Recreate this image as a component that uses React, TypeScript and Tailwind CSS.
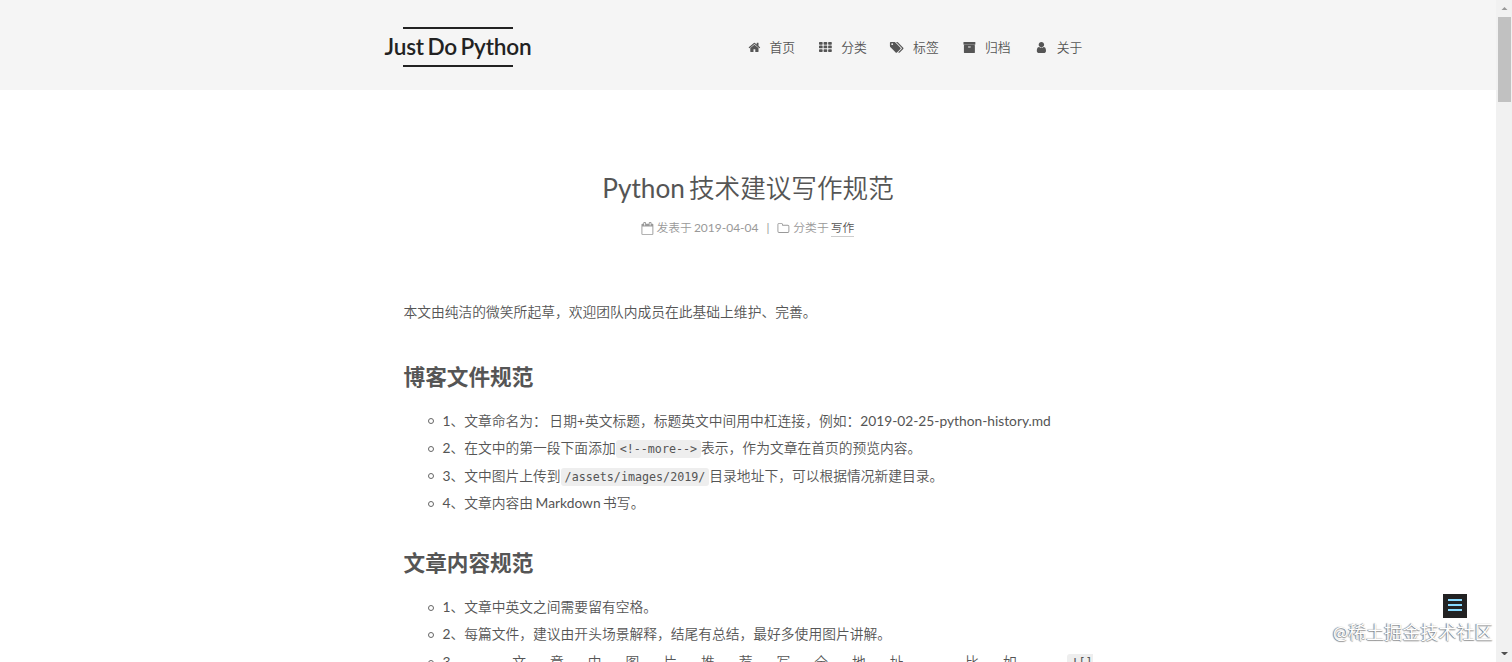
import type { ReactNode } from "react";

const icons = {
  home: "M1472 992v480q0 26-19 45t-45 19h-384v-384h-256v384h-384q-26 0-45-19t-19-45v-480q0-1 .5-3t.5-3l575-474 575 474q1 2 1 6zm223-69l-62 74q-8 9-21 11h-3q-13 0-21-7l-692-577-692 577q-12 8-24 7-13-2-21-11l-62-74q-8-10-7-23.5t11-21.5l719-599q32-26 76-26t76 26l244 204v-195q0-14 9-23t23-9h192q14 0 23 9t9 23v408l219 182q10 8 11 21.5t-7 23.5z",
  tags: "M576 448q0-53-37.5-90.5t-90.5-37.5-90.5 37.5-37.5 90.5 37.5 90.5 90.5 37.5 90.5-37.5 37.5-90.5zm1067 576q0 53-37 90l-491 492q-39 37-91 37-53 0-90-37l-715-716q-38-37-64.5-101t-26.5-117v-416q0-52 38-90t90-38h416q53 0 117 26.5t102 64.5l715 714q37 39 37 91zm384 0q0 53-37 90l-491 492q-39 37-91 37-36 0-59-14t-53-45l470-470q37-37 37-90 0-52-37-91l-715-714q-38-38-102-64.5t-117-26.5h224q53 0 117 26.5t102 64.5l715 714q37 39 37 91z",
  archive:
    "M1088 832q0-26-19-45t-45-19h-256q-26 0-45 19t-19 45 19 45 45 19h256q26 0 45-19t19-45zm576-192v960q0 26-19 45t-45 19h-1408q-26 0-45-19t-19-45v-960q0-26 19-45t45-19h1408q26 0 45 19t19 45zm64-448v256q0 26-19 45t-45 19h-1536q-26 0-45-19t-19-45v-256q0-26 19-45t45-19h1536q26 0 45 19t19 45z",
  user: "M1536 1399q0 109-62.5 187t-150.5 78h-854q-88 0-150.5-78t-62.5-187q0-85 8.5-160.5t31.5-152 58.5-131 94-89 134.5-34.5q131 128 313 128t313-128q76 0 134.5 34.5t94 89 58.5 131 31.5 152 8.5 160.5zm-256-887q0 159-112.5 271.5t-271.5 112.5-271.5-112.5-112.5-271.5 112.5-271.5 271.5-112.5 271.5 112.5 112.5 271.5z",
  th: "M96 128h320q96 0 96 96v192q0 96-96 96h-320q-96 0-96-96v-192q0-96 96-96zM736 128h320q96 0 96 96v192q0 96-96 96h-320q-96 0-96-96v-192q0-96 96-96zM1376 128h320q96 0 96 96v192q0 96-96 96h-320q-96 0-96-96v-192q0-96 96-96zM96 640h320q96 0 96 96v192q0 96-96 96h-320q-96 0-96-96v-192q0-96 96-96zM736 640h320q96 0 96 96v192q0 96-96 96h-320q-96 0-96-96v-192q0-96 96-96zM1376 640h320q96 0 96 96v192q0 96-96 96h-320q-96 0-96-96v-192q0-96 96-96zM96 1152h320q96 0 96 96v192q0 96-96 96h-320q-96 0-96-96v-192q0-96 96-96zM736 1152h320q96 0 96 96v192q0 96-96 96h-320q-96 0-96-96v-192q0-96 96-96zM1376 1152h320q96 0 96 96v192q0 96-96 96h-320q-96 0-96-96v-192q0-96 96-96z",
  calendar:
    "M192 1664h1408v-1024h-1408v1024zm384-1216v-288q0-14-9-23t-23-9h-64q-14 0-23 9t-9 23v288q0 14 9 23t23 9h64q14 0 23-9t9-23zm768 0v-288q0-14-9-23t-23-9h-64q-14 0-23 9t-9 23v288q0 14 9 23t23 9h64q14 0 23-9t9-23zm384-64v1280q0 52-38 90t-90 38h-1408q-52 0-90-38t-38-90v-1280q0-52 38-90t90-38h128v-96q0-66 47-113t113-47h64q66 0 113 47t47 113v96h384v-96q0-66 47-113t113-47h64q66 0 113 47t47 113v96h128q52 0 90 38t38 90z",
  folder:
    "M1600 1312v-704q0-40-28-68t-68-28h-704q-40 0-68-28t-28-68v-64q0-40-28-68t-68-28h-320q-40 0-68 28t-28 68v960q0 40 28 68t68 28h1216q40 0 68-28t28-68zm128-704v704q0 92-66 158t-158 66h-1216q-92 0-158-66t-66-158v-960q0-92 66-158t158-66h320q92 0 158 66t66 158v32h672q92 0 158 66t66 158z",
};

type IconName = keyof typeof icons;

const menu: { icon: IconName; label: string; className?: string }[] = [
  { icon: "home", label: "首页" },
  { icon: "th", label: "分类", className: "-ml-px" },
  { icon: "tags", label: "标签", className: "-ml-[2.5px]" },
  { icon: "archive", label: "归档" },
  { icon: "user", label: "关于" },
];

function Icon({ name, className = "" }: { name: IconName; className?: string }) {
  return (
    <svg
      viewBox={name === "tags" ? "0 0 2048 1792" : "0 0 1792 1792"}
      className={`h-[12.8px] shrink-0 overflow-visible fill-current ${className}`}
    >
      <path d={icons[name]} />
    </svg>
  );
}

function Code({ children, className = "rounded-[3px] px-1" }: { children: ReactNode; className?: string }) {
  return (
    <code
      className={`bg-[#eee] py-0.5 font-['DejaVu_Sans_Mono',monospace] text-[11.7px] leading-none ${className}`}
    >
      {children}
    </code>
  );
}

function Item({ children, className = "" }: { children: ReactNode; className?: string }) {
  return (
    <li className="flex h-[27.56px] items-center">
      <span className="mr-[9px] mt-0.5 h-1.5 w-1.5 shrink-0 rounded-full border border-[#666]" />
      <div className={`flex-1 whitespace-nowrap ${className}`}>{children}</div>
    </li>
  );
}

function Header() {
  return (
    <header className="h-[90px] bg-[#f5f5f5]">
      <div className="mx-auto flex h-full w-[726px] justify-between">
        <div className="flex w-[146px] flex-col items-center pt-[27px] text-[#222]">
          <span className="h-0.5 w-[110px] bg-[#222]" />
          <span className="h-9 whitespace-nowrap text-[22.6px] leading-[36px] font-semibold tracking-[-0.17px] [word-spacing:-2px]">
            Just Do Python
          </span>
          <span className="h-0.5 w-[110px] bg-[#222]" />
        </div>
        <nav className="flex w-[363px] pt-[37px] text-[12.8px] leading-[20px] text-[#555]">
          {menu.map(({ icon, label, className }) => (
            <a key={label} className="flex h-5 w-[71.8px] shrink-0 items-center">
              <span className="flex w-[21.5px]">
                <Icon name={icon} className={className} />
              </span>
              {label}
            </a>
          ))}
        </nav>
      </div>
    </header>
  );
}

function Post() {
  return (
    <article className="mx-auto w-[689px] pt-[78px] text-[#555]">
      <h1 className="text-center text-[25.6px] leading-[40px] [word-spacing:-2.5px]">
        <span className="text-[26.2px]">Python</span> 技术建议写作规范
      </h1>
      <div className="mt-2.5 flex h-5 items-center justify-center text-[11.8px] text-[#999]">
        <Icon name="calendar" className="mr-[3px]" />
        <span className="[word-spacing:-1px]">
          发表于 <span className="text-[12px]">2019-04-04</span>
        </span>
        <span className="mx-2">|</span>
        <Icon name="folder" className="mr-[3px]" />
        <span>分类于</span>
        <a className="mr-px ml-0.5 border-b border-[#ccc] leading-4 text-[#555]">写作</a>
      </div>

      <div className="mt-[60px] text-[13.78px] leading-[27.56px]">
        <p>本文由纯洁的微笑所起草，欢迎团队内成员在此基础上维护、完善。</p>

        <h2 className="mt-[35px] font-[Lato,'Noto_Sans_CJK_SC',sans-serif] text-[21.65px] leading-[32px] font-bold">
          博客文件规范
        </h2>
        <ul className="mt-[14px] pl-6">
          <Item className="[word-spacing:-1px]">
            1、文章命名为： 日期+英文标题，标题英文中间用中杠连接，例如：2019-02-25-python-history.md
          </Item>
          <Item>
            2、在文中的第一段下面添加<Code>&lt;!--more--&gt;</Code>表示，作为文章在首页的预览内容。
          </Item>
          <Item>
            3、文中图片上传到<Code>/assets/images/2019/</Code>目录地址下，可以根据情况新建目录。
          </Item>
          <Item className="[word-spacing:-1px]">4、文章内容由 Markdown 书写。</Item>
        </ul>

        <h2 className="mt-[30px] font-[Lato,'Noto_Sans_CJK_SC',sans-serif] text-[21.65px] leading-[32px] font-bold">
          文章内容规范
        </h2>
        <ul className="mt-[14px] pl-6">
          <Item>1、文章中英文之间需要留有空格。</Item>
          <Item>2、每篇文件，建议由开头场景解释，结尾有总结，最好多使用图片讲解。</Item>
          <Item className="text-justify [text-align-last:justify]">
            3、文章中图片推荐写全地址，比如<span className="align-[-5px] leading-none">：</span>
            <Code className="-ml-[11px] rounded-l-[3px] pl-1">![]</Code>
          </Item>
        </ul>
      </div>
    </article>
  );
}

function Scrollbar() {
  return (
    <div className="flex w-4 shrink-0 flex-col items-center justify-between bg-[#f1f1f1]">
      <div className="flex flex-col items-center">
        <span className="flex h-[17px] items-center">
          <svg viewBox="0 0 8 4" className="w-[7px] fill-[#999]">
            <path d="M4 0l4 4H0z" />
          </svg>
        </span>
        <span className="h-[85px] w-[13px] bg-[#c1c1c1]" />
      </div>
      <span className="flex h-[17px] items-center">
        <svg viewBox="0 0 8 4" className="w-[7px] fill-[#505050]">
          <path d="M4 4l4-4H0z" />
        </svg>
      </span>
    </div>
  );
}

export default function App() {
  return (
    <div className="relative flex h-[662px] w-[1512px] overflow-hidden bg-white font-[Lato,'Noto_Sans_CJK_SC_DemiLight','Noto_Sans_CJK_SC_Light','Noto_Sans_CJK_SC',sans-serif]">
      <main className="min-w-0 flex-1">
        <Header />
        <Post />
      </main>
      <Scrollbar />

      {/* sidebar toggle */}
      <button className="absolute top-[594px] left-[1443px] flex h-6 w-6 flex-col items-center gap-[3px] bg-[#222] pt-[5px]">
        <span className="h-0.5 w-3.5 bg-[#87daff]" />
        <span className="h-0.5 w-3.5 bg-[#87daff]" />
        <span className="h-0.5 w-3.5 bg-[#87daff]" />
      </button>
      <span className="absolute top-[620px] left-[1333px] text-[18.1px] leading-6 whitespace-nowrap text-white [text-shadow:-1px_0_1px_#777,0_1px_1px_#999]">
        @稀土掘金技术社区
      </span>
    </div>
  );
}
